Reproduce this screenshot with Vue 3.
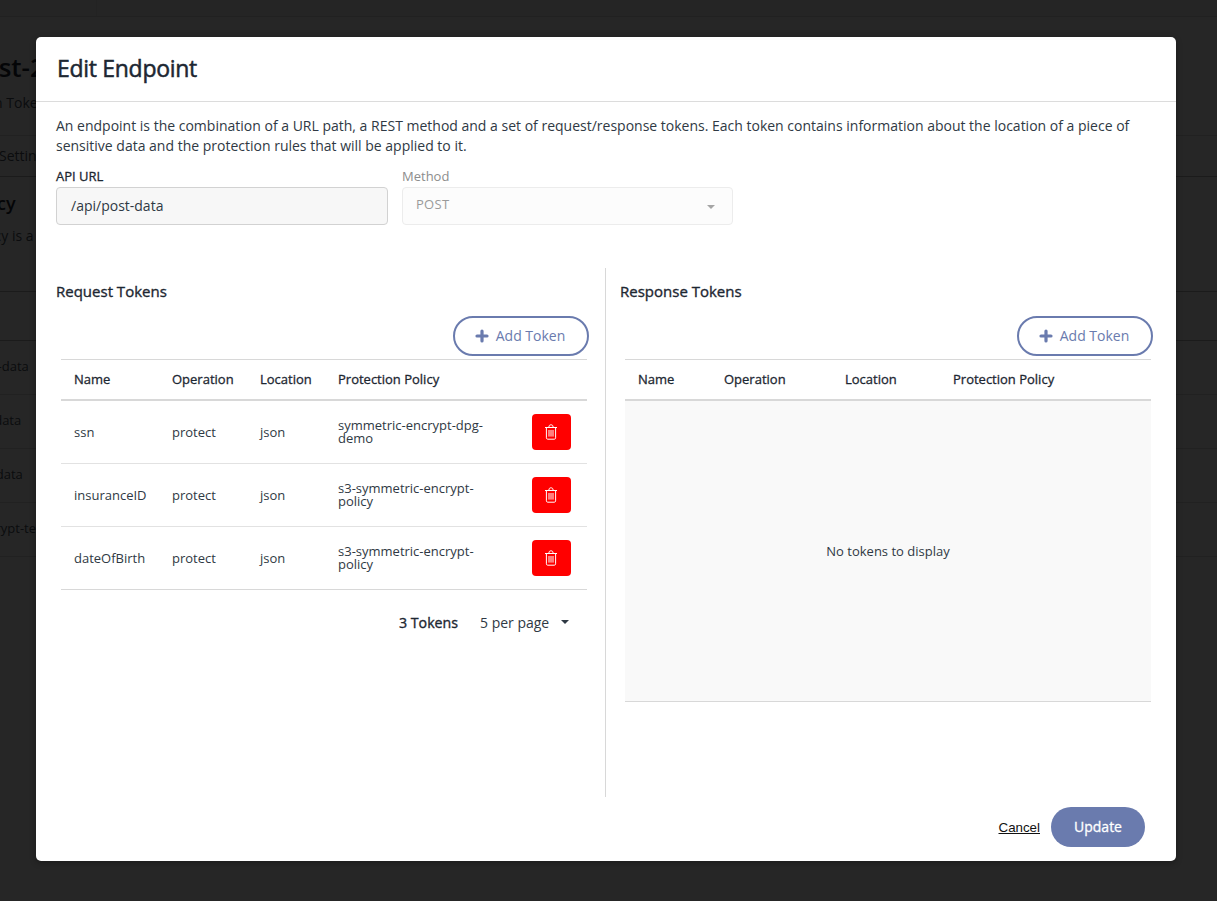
<script setup>
import { ref } from 'vue';

const bgRows = ['post-data', 'get-data', 'put-data', 'encrypt-test'];

const requestTokens = ref([
  { name: 'ssn', operation: 'protect', location: 'json', policy: 'symmetric-encrypt-dpg-demo' },
  { name: 'insuranceID', operation: 'protect', location: 'json', policy: 's3-symmetric-encrypt-policy' },
  { name: 'dateOfBirth', operation: 'protect', location: 'json', policy: 's3-symmetric-encrypt-policy' },
]);
</script>

<template>
  <div class="page">
    <div class="topbar"><div class="topbar-cell"></div></div>
    <div class="bg-head">
      <div class="bg-title">Test-2</div>
      <div class="bg-sub">Protection Tokens</div>
    </div>
    <div class="bg-tab">Settings</div>
    <div class="bg-policy">
      <div class="bg-policy-title">Policy</div>
      <div class="bg-policy-text">A policy is a</div>
    </div>
    <div class="bg-table-head"></div>
    <div v-for="row in bgRows" :key="row" class="bg-row">
      <span :class="'bg-row-text bg-row-text--' + row">{{ row }}</span>
    </div>

    <div class="backdrop"></div>

    <div class="modal">
      <div class="modal-header">
        <h2 class="modal-title">Edit Endpoint</h2>
      </div>

      <div class="modal-body">
        <p class="intro">
          An endpoint is the combination of a URL path, a REST method and a set of request/response tokens. Each token contains information about the location of a piece of sensitive data and the protection rules that will be applied to it.
        </p>

        <div class="form-row">
          <div class="field">
            <label class="field-label">API URL</label>
            <div class="input">/api/post-data</div>
          </div>
          <div class="field field--disabled">
            <label class="field-label">Method</label>
            <div class="input input--select">
              <span class="select-value">POST</span>
              <span class="select-caret"></span>
            </div>
          </div>
        </div>

        <div class="token-columns">
          <section class="token-col token-col--left">
            <h3 class="col-title">Request Tokens</h3>
            <div class="col-actions">
              <button class="add-btn">
                <svg class="plus" viewBox="0 0 14 14" width="14" height="14">
                  <path d="M7 2v10M2 7h10" fill="none" stroke="currentColor" stroke-width="3.2" stroke-linecap="round" />
                </svg>
                <span class="add-label">Add Token</span>
              </button>
            </div>
            <div class="table">
              <div class="tr th-row grid-req">
                <div class="cell">Name</div>
                <div class="cell">Operation</div>
                <div class="cell">Location</div>
                <div class="cell">Protection Policy</div>
                <div class="cell"></div>
              </div>
              <div v-for="token in requestTokens" :key="token.name" class="tr td-row grid-req">
                <div class="cell">{{ token.name }}</div>
                <div class="cell">{{ token.operation }}</div>
                <div class="cell">{{ token.location }}</div>
                <div class="cell cell--policy">{{ token.policy }}</div>
                <div class="cell">
                  <button class="delete-btn" aria-label="Delete">
                    <svg viewBox="0 0 14 16" width="14" height="16" fill="none" stroke="#fff" stroke-width="1">
                      <path d="M1 3.5h12M2.4 3.5v10.3c0 .8.5 1.4 1.2 1.4h6.8c.7 0 1.2-.6 1.2-1.4V3.5" />
                      <path d="M4.6 3.5l.8-2c.1-.3.4-.6.8-.6h1.6c.4 0 .7.3.8.6l.8 2" />
                      <path d="M5 6v6.6M7 6v6.6M9 6v6.6" />
                    </svg>
                  </button>
                </div>
              </div>
            </div>
            <div class="table-footer">
              <span class="token-count">3 Tokens</span>
              <span class="per-page">5 per page</span>
              <span class="per-page-caret"></span>
            </div>
          </section>

          <section class="token-col token-col--right">
            <h3 class="col-title">Response Tokens</h3>
            <div class="col-actions">
              <button class="add-btn">
                <svg class="plus" viewBox="0 0 14 14" width="14" height="14">
                  <path d="M7 2v10M2 7h10" fill="none" stroke="currentColor" stroke-width="3.2" stroke-linecap="round" />
                </svg>
                <span class="add-label">Add Token</span>
              </button>
            </div>
            <div class="table">
              <div class="tr th-row grid-res">
                <div class="cell">Name</div>
                <div class="cell">Operation</div>
                <div class="cell">Location</div>
                <div class="cell">Protection Policy</div>
              </div>
              <div class="empty">No tokens to display</div>
            </div>
          </section>
        </div>
      </div>

      <div class="modal-footer">
        <a class="cancel">Cancel</a>
        <button class="update-btn">Update</button>
      </div>
    </div>
  </div>
</template>

<style>
html,
body {
  margin: 0;
  background: #fff;
}
</style>

<style scoped>
.page {
  position: relative;
  height: 901px;
  overflow: hidden;
  background: #fff;
  font-family: "Open Sans", "Noto Sans", sans-serif;
  color: #1d2732;
}

/* page behind the dialog */
.topbar {
  height: 16px;
  border-bottom: 1px solid #dcdcdc;
  background: #f8f8f8;
}

.topbar-cell {
  width: 96px;
  height: 16px;
  border-right: 1px solid #e8e8e8;
}

.bg-head {
  height: 118px;
  margin-left: -31px;
  border-bottom: 1px solid #dedede;
}

.bg-title {
  padding-top: 32px;
  font-size: 26px;
  line-height: 36px;
  font-weight: 600;
}

.bg-sub {
  margin-left: -34px;
  padding-top: 8px;
  font-size: 14px;
  line-height: 20px;
  color: #4a5560;
  white-space: nowrap;
}

.bg-tab {
  height: 40px;
  line-height: 40px;
  margin-left: -1px;
  font-size: 14px;
  color: #4a5560;
  border-bottom: 1px solid #b5b5b5;
}

.bg-policy {
  height: 114px;
  margin-left: -35px;
  border-bottom: 1px solid #b5b5b5;
}

.bg-policy-title {
  padding-top: 14px;
  font-size: 18px;
  line-height: 24px;
  font-weight: 600;
}

.bg-policy-text {
  margin-left: -7px;
  padding-top: 11px;
  font-size: 14px;
  line-height: 20px;
  color: #4a5560;
}

.bg-table-head {
  height: 48px;
  border-bottom: 1px solid #b5b5b5;
}

.bg-row {
  height: 53px;
  line-height: 51px;
  font-size: 13px;
  color: #4a5560;
  border-bottom: 1px solid #dedede;
  white-space: nowrap;
}

.bg-row-text {
  display: inline-block;
  margin-left: -29px;
}

.bg-row-text--encrypt-test {
  margin-left: -26px;
}

.backdrop {
  position: absolute;
  inset: 0;
  background: rgba(0, 0, 0, 0.85);
}

/* dialog */
.modal {
  position: absolute;
  left: 36px;
  top: 37px;
  width: 1140px;
  height: 824px;
  display: flex;
  flex-direction: column;
  background: #fff;
  border-radius: 5px;
  box-shadow: 0 2px 6px rgba(0, 0, 0, 0.3);
}

.modal-header {
  height: 64px;
  display: flex;
  align-items: center;
  padding: 0 21px;
  border-bottom: 1px solid #dcdcdc;
}

.modal-title {
  margin: 0 0 3px;
  font-size: 23px;
  font-weight: 400;
  letter-spacing: -0.3px;
  -webkit-text-stroke: 0.5px #1d2732;
  color: #1d2732;
}

.modal-body {
  flex: 1;
  padding: 14px 20px 0;
}

.intro {
  margin: 0;
  font-size: 14px;
  line-height: 20px;
  color: #2f3944;
}

.form-row {
  display: flex;
  gap: 14px;
  margin-top: 10px;
}

.field {
  width: 332px;
}

.field--disabled {
  width: 331px;
}

.field-label {
  display: block;
  height: 21px;
  font-size: 13px;
  line-height: 21px;
  -webkit-text-stroke: 0.3px #1d2732;
  color: #1d2732;
}

.input {
  box-sizing: border-box;
  height: 38px;
  padding: 0 14px 1px;
  display: flex;
  align-items: center;
  background: #f7f7f7;
  border: 1px solid #d2d2d2;
  border-radius: 4px;
  font-size: 14px;
  color: #2f3944;
}

.field--disabled .field-label {
  -webkit-text-stroke: 0;
  color: #8d8d8d;
}

.input--select {
  justify-content: space-between;
  padding-left: 13px;
  background: #fcfcfc;
  border-color: #ececec;
  color: #9a9a9a;
  font-size: 13px;
}

.select-value {
  margin-top: -3px;
  letter-spacing: 0.3px;
}

.select-caret {
  margin: 3px 3px 0 0;
  border-left: 4px solid transparent;
  border-right: 4px solid transparent;
  border-top: 4px solid #a5a5a5;
}

.token-columns {
  display: grid;
  grid-template-columns: 550px 1fr;
  height: 529px;
  margin-top: 43px;
}

.token-col--left {
  border-right: 1px solid #d8d8d8;
}

.token-col--right {
  padding-left: 14px;
}

.col-title {
  margin: 13px 0 0;
  font-size: 15px;
  line-height: 20px;
  font-weight: 400;
  -webkit-text-stroke: 0.35px #1d2732;
  color: #1d2732;
}

.col-actions {
  display: flex;
  justify-content: flex-end;
  height: 43px;
  margin-top: 15px;
  padding-right: 16px;
}

.token-col--right .col-actions {
  padding-right: 3px;
}

.add-btn {
  box-sizing: border-box;
  width: 136px;
  height: 40px;
  display: flex;
  align-items: center;
  justify-content: center;
  gap: 7px;
  padding: 0 2px 0 0;
  background: #fff;
  border: 2px solid #6a7bae;
  border-radius: 20px;
  font-family: inherit;
  font-size: 14px;
  color: #6a7bae;
}

.add-label {
  margin-top: -2px;
}

.table {
  width: 526px;
  margin-left: 5px;
  border-top: 1px solid #d8d8d8;
}

.token-col--right .table {
  margin-left: 5px;
}

.tr {
  display: grid;
  align-items: center;
}

.grid-req {
  grid-template-columns: 98px 88px 78px 194px 68px;
}

.grid-res {
  grid-template-columns: 86px 121px 108px 211px;
}

.th-row {
  box-sizing: border-box;
  height: 41px;
  padding-bottom: 2px;
  border-bottom: 2px solid #d8d8d8;
  font-size: 13px;
  -webkit-text-stroke: 0.3px #1d2732;
  color: #1d2732;
}

.td-row {
  height: 62px;
  border-bottom: 1px solid #e2e2e2;
  font-size: 13px;
  color: #2f3944;
}

.td-row:last-child {
  border-bottom-color: #d8d8d8;
}

.cell {
  padding-left: 13px;
}

.cell--policy {
  padding-right: 30px;
  line-height: 13px;
}

.delete-btn {
  width: 39px;
  height: 36px;
  display: flex;
  align-items: center;
  justify-content: center;
  padding: 0 1px 0 0;
  background: #ff0000;
  border: none;
  border-radius: 4px;
}

.table-footer {
  display: flex;
  align-items: center;
  height: 20px;
  margin-top: 22px;
  padding-left: 343px;
  font-size: 14px;
}

.token-count {
  width: 81px;
  font-size: 14.2px;
  -webkit-text-stroke: 0.35px #1d2732;
  color: #1d2732;
}

.per-page {
  color: #2f3944;
}

.per-page-caret {
  margin-left: 12px;
  border-left: 4px solid transparent;
  border-right: 4px solid transparent;
  border-top: 4px solid #2f3944;
}

.empty {
  height: 300px;
  display: flex;
  align-items: center;
  justify-content: center;
  background: #f9f9f9;
  border-bottom: 1px solid #d8d8d8;
  font-size: 13px;
  color: #2f3944;
}

.modal-footer {
  display: flex;
  justify-content: flex-end;
  align-items: center;
  gap: 11px;
  padding: 10px 31px 14px 0;
}

.cancel {
  font-family: "Liberation Sans", Arial, sans-serif;
  font-size: 13.33px;
  color: #111;
  text-decoration: underline;
  margin-top: 1px;
}

.update-btn {
  width: 94px;
  height: 40px;
  padding: 0 0 2px;
  background: #6a7bae;
  border: none;
  border-radius: 20px;
  font-family: inherit;
  font-size: 14px;
  -webkit-text-stroke: 0.3px #fff;
  color: #fff;
}
</style>
